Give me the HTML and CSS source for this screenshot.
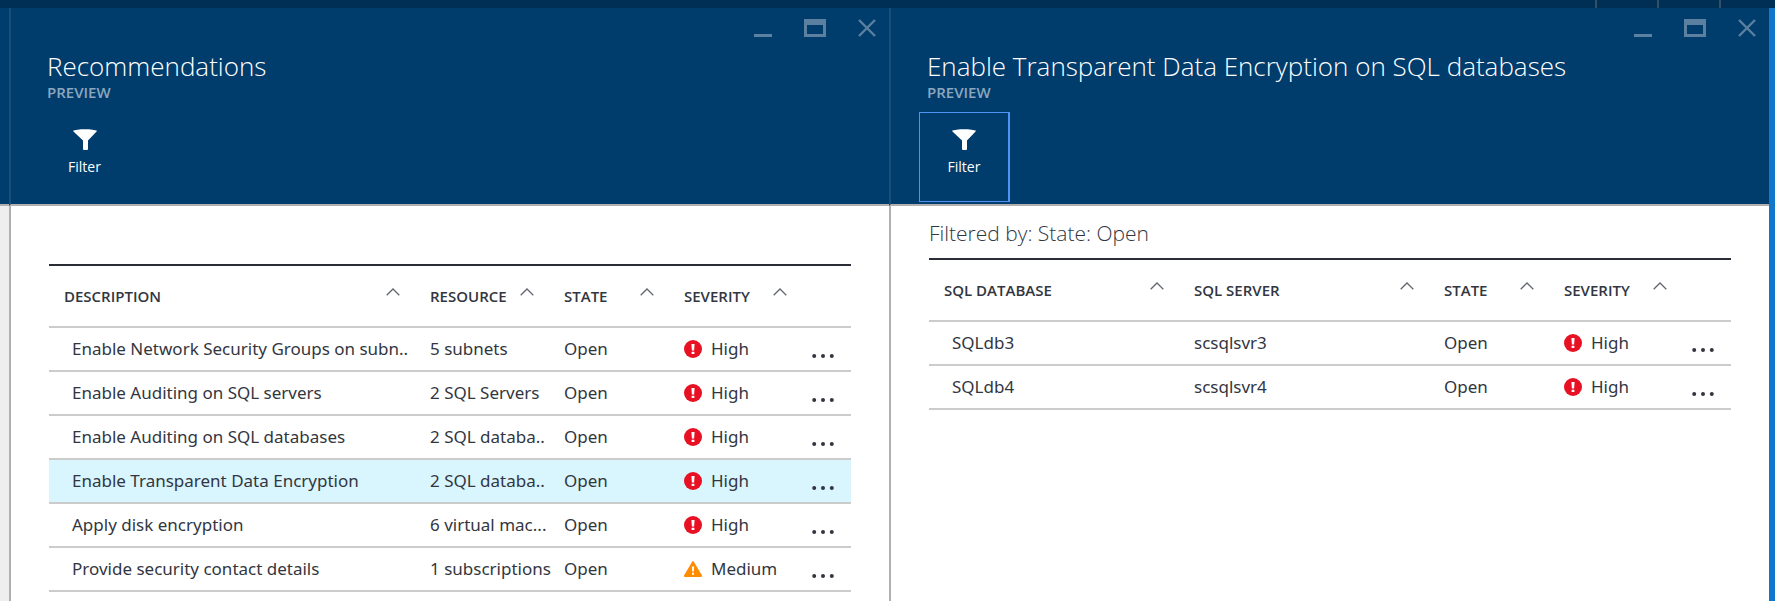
FILE: index.html
```html
<!DOCTYPE html>
<html lang="en">
<head>
<meta charset="utf-8">
<title>Recommendations</title>
<link rel="stylesheet" href="styles.css">
</head>
<body>
<svg class="sprite" aria-hidden="true">
  <symbol id="i-min" viewBox="0 0 18 18"><path d="M0 15h18v3H0z" fill="currentColor"/></symbol>
  <symbol id="i-max" viewBox="0 0 22 18"><path d="M0 0h22v18H0zM3 6v9h16V6z" fill="currentColor" fill-rule="evenodd"/></symbol>
  <symbol id="i-close" viewBox="0 0 18 18"><path d="M1 1l16 16M17 1L1 17" stroke="currentColor" stroke-width="2.4" fill="none"/></symbol>
  <symbol id="i-filter" viewBox="0 0 24 21"><path d="M0 1.8C3-.4 21-.4 24 1.8 23.500 3 17 9.500 15 11.500V20q0 1-1 1h-3q-1 0-1-1v-8.500C8 9.500.5 3 0 1.800z" fill="currentColor"/></symbol>
  <symbol id="i-sort" viewBox="0 0 14 8"><path d="M.7 7.200L7 1l6.300 6.200" stroke="currentColor" stroke-width="1.300" fill="none"/></symbol>
  <symbol id="i-high" viewBox="0 0 18 18"><circle cx="9" cy="9" r="9" fill="#e81123"/><path d="M7.400 4h3.200l-.5 6.600H7.900zM7.600 11.800h2.800v2.200H7.600z" fill="#fff"/></symbol>
  <symbol id="i-medium" viewBox="0 0 18 18"><path d="M8 2q1-1.800 2 0l8 13.500q.3 1.300-1 1.500H1q-1.300-.2-1-1.500z" fill="#ff8c00"/><path d="M7.900 6.500h2.200l-.3 5H8.200zM8 12.800h2v1.900H8z" fill="#fff"/></symbol>
  <symbol id="i-more" viewBox="0 0 22 4"><g fill="currentColor"><circle cx="2.200" cy="2" r="2"/><circle cx="11" cy="2" r="2"/><circle cx="19.800" cy="2" r="2"/></g></symbol>
</svg>

<div class="topbar"><span></span><span></span><span></span></div>

<main class="journey">
  <div class="previous"><div class="blade-head"></div></div>

  <section class="blade" aria-labelledby="t1">
    <header class="blade-head">
      <div class="window-buttons">
        <button aria-label="Minimize"><svg class="square"><use href="#i-min"/></svg></button>
        <button aria-label="Maximize"><svg class="wide"><use href="#i-max"/></svg></button>
        <button aria-label="Close"><svg class="square"><use href="#i-close"/></svg></button>
      </div>
      <h2 id="t1">Recommendations</h2>
      <p class="preview">PREVIEW</p>
      <button class="command"><svg><use href="#i-filter"/></svg>Filter</button>
    </header>
    <div class="blade-body spaced">
      <table>
        <colgroup><col><col class="c-resource"><col class="c-state"><col class="c-severity"><col class="c-more"></colgroup>
        <thead>
          <tr>
            <th><button>DESCRIPTION<svg><use href="#i-sort"/></svg></button></th>
            <th><button>RESOURCE<svg><use href="#i-sort"/></svg></button></th>
            <th><button>STATE<svg><use href="#i-sort"/></svg></button></th>
            <th class="severity"><button>SEVERITY<svg><use href="#i-sort"/></svg></button></th>
            <th></th>
          </tr>
        </thead>
        <tbody>
          <tr><td>Enable Network Security Groups on subn..</td><td>5 subnets</td><td>Open</td><td><span class="level"><svg><use href="#i-high"/></svg>High</span></td><td><button class="more" aria-label="More"><svg><use href="#i-more"/></svg></button></td></tr>
          <tr><td>Enable Auditing on SQL servers</td><td>2 SQL Servers</td><td>Open</td><td><span class="level"><svg><use href="#i-high"/></svg>High</span></td><td><button class="more" aria-label="More"><svg><use href="#i-more"/></svg></button></td></tr>
          <tr><td>Enable Auditing on SQL databases</td><td>2 SQL databa..</td><td>Open</td><td><span class="level"><svg><use href="#i-high"/></svg>High</span></td><td><button class="more" aria-label="More"><svg><use href="#i-more"/></svg></button></td></tr>
          <tr class="selected"><td>Enable Transparent Data Encryption</td><td>2 SQL databa..</td><td>Open</td><td><span class="level"><svg><use href="#i-high"/></svg>High</span></td><td><button class="more" aria-label="More"><svg><use href="#i-more"/></svg></button></td></tr>
          <tr><td>Apply disk encryption</td><td>6 virtual mac...</td><td>Open</td><td><span class="level"><svg><use href="#i-high"/></svg>High</span></td><td><button class="more" aria-label="More"><svg><use href="#i-more"/></svg></button></td></tr>
          <tr><td>Provide security contact details</td><td>1 subscriptions</td><td>Open</td><td><span class="level"><svg><use href="#i-medium"/></svg>Medium</span></td><td><button class="more" aria-label="More"><svg><use href="#i-more"/></svg></button></td></tr>
        </tbody>
      </table>
    </div>
  </section>

  <section class="blade" aria-labelledby="t2">
    <header class="blade-head">
      <div class="window-buttons">
        <button aria-label="Minimize"><svg class="square"><use href="#i-min"/></svg></button>
        <button aria-label="Maximize"><svg class="wide"><use href="#i-max"/></svg></button>
        <button aria-label="Close"><svg class="square"><use href="#i-close"/></svg></button>
      </div>
      <h2 id="t2">Enable Transparent Data Encryption on SQL databases</h2>
      <p class="preview">PREVIEW</p>
      <button class="command focused"><svg><use href="#i-filter"/></svg>Filter</button>
    </header>
    <div class="blade-body">
      <p class="filtered">Filtered by: State: Open</p>
      <table>
        <colgroup><col><col class="c-server"><col class="c-state"><col class="c-severity"><col class="c-more"></colgroup>
        <thead>
          <tr>
            <th><button>SQL DATABASE<svg><use href="#i-sort"/></svg></button></th>
            <th><button>SQL SERVER<svg><use href="#i-sort"/></svg></button></th>
            <th><button>STATE<svg><use href="#i-sort"/></svg></button></th>
            <th class="severity"><button>SEVERITY<svg><use href="#i-sort"/></svg></button></th>
            <th></th>
          </tr>
        </thead>
        <tbody>
          <tr><td>SQLdb3</td><td>scsqlsvr3</td><td>Open</td><td><span class="level"><svg><use href="#i-high"/></svg>High</span></td><td><button class="more" aria-label="More"><svg><use href="#i-more"/></svg></button></td></tr>
          <tr><td>SQLdb4</td><td>scsqlsvr4</td><td>Open</td><td><span class="level"><svg><use href="#i-high"/></svg>High</span></td><td><button class="more" aria-label="More"><svg><use href="#i-more"/></svg></button></td></tr>
        </tbody>
      </table>
    </div>
  </section>

  <div class="edge"></div>
</main>
</body>
</html>
```
FILE: styles.css
```css
* { box-sizing: border-box; }
body {
  margin: 0;
  min-height: 100vh;
  display: flex;
  flex-direction: column;
  background: #fff;
  color: #32363f;
  font-family: "Open Sans", "Noto Sans", sans-serif;
  font-size: 17px;
}
h2, p { margin: 0; }
button {
  border: 0;
  padding: 0;
  background: none;
  color: inherit;
  font: inherit;
}
.sprite { display: none; }

.topbar {
  height: 8px;
  flex: none;
  display: flex;
  justify-content: flex-end;
  gap: 60px;
  padding-right: 54px;
  background: #002f55;
}
.topbar span { width: 2px; background: #344f68; }

.journey { flex: 1; display: flex; }
.previous { width: 9px; background: #eee; }
.edge { width: 6px; background: #1177cc; }
.blade { flex: 1; min-width: 0; display: flex; flex-direction: column; }

.blade-head {
  position: relative;
  height: 198px;
  padding: 38px 36px 0;
  background: #003c6c;
  border-bottom: 2px solid #b0b0b0;
  color: #fff;
}
.blade .blade-head { border-left: 2px solid #1b4d79; }
.blade-head h2 { font-size: 26px; font-weight: 300; line-height: 40px; white-space: nowrap; }
.preview { font-size: 15px; font-weight: 600; line-height: 12px; color: #8ca7bf; }

.window-buttons {
  position: absolute;
  top: 11px;
  right: 13px;
  display: flex;
  gap: 32px;
  color: #5c80a0;
}
.window-buttons svg { display: block; height: 18px; }
.square { width: 18px; }
.wide { width: 22px; }

.command {
  display: flex;
  flex-direction: column;
  align-items: center;
  gap: 6px;
  width: 91px;
  height: 90px;
  margin: 14px 0 0 -8px;
  padding-top: 16px;
  border: 1px solid transparent;
  font-size: 14px;
  line-height: 22px;
}
.command svg { width: 24px; height: 21px; }
.focused { border-color: #4e93f5; border-right-width: 2px; }

.blade-body { flex: 1; padding: 0 38px; border-left: 2px solid #b0b0b0; }
.spaced { padding-top: 58px; }
.filtered { font-size: 21px; font-weight: 300; line-height: 28px; padding: 13px 0 11px; }

table {
  width: 100%;
  table-layout: fixed;
  border-collapse: separate;
  border-spacing: 0;
  border-top: 2px solid #2b2d36;
}
.c-resource { width: 134px; }
.c-server { width: 250px; }
.c-state { width: 120px; }
.c-severity { width: 110px; }
.c-more { width: 57px; }
th, td { padding: 0; border-bottom: 2px solid #ccc; text-align: left; white-space: nowrap; }
th { height: 62px; font-size: 15px; }
th button {
  display: flex;
  justify-content: space-between;
  align-items: center;
  width: 100%;
  padding-right: 30px;
  font-weight: 600;
}
th button svg { width: 14px; height: 8px; margin-bottom: 8px; color: #62666d; }
th:first-child { padding-left: 15px; }
.severity button { padding-right: 7px; }
td { height: 44px; font-family: "Noto Sans", "Open Sans", sans-serif; line-height: 24px; }
td:first-child { padding-left: 23px; }
.selected td { background: #d9f5fe; }
.level { display: flex; align-items: center; gap: 9px; }
.level svg { width: 18px; height: 18px; }
.more { display: block; width: 100%; padding-top: 14px; }
.more svg { display: block; width: 22px; height: 4px; margin: 0 auto; }
```
